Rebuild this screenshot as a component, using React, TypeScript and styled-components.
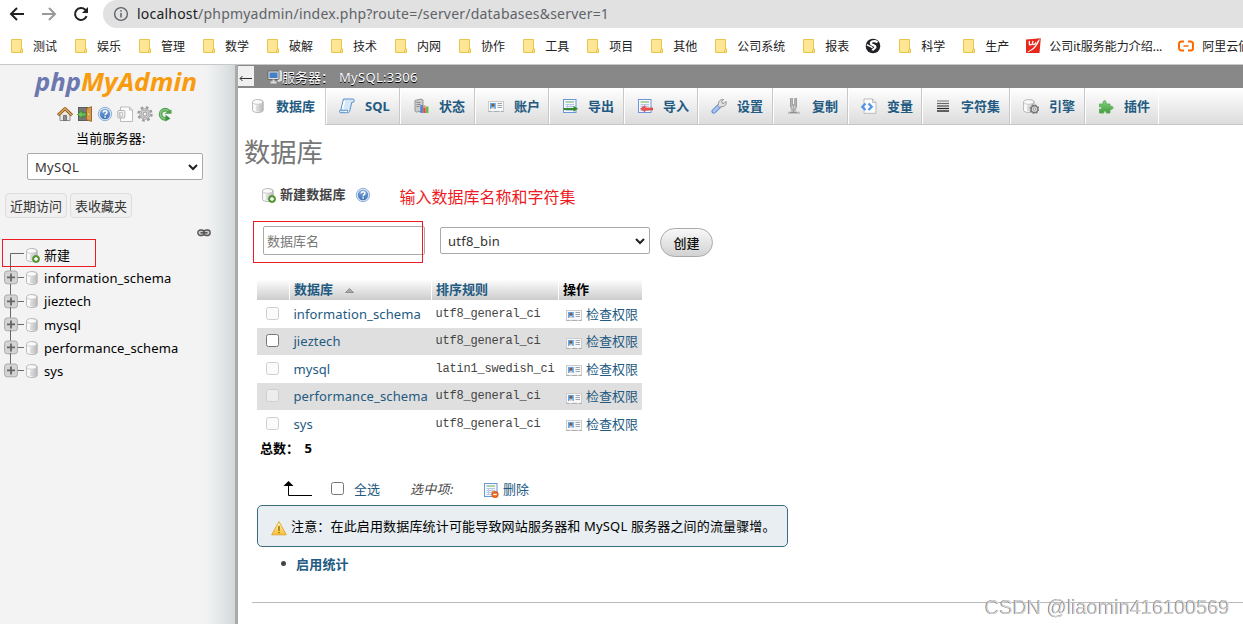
import React from "react";
import styled, { createGlobalStyle } from "styled-components";

const UI = `"Noto Sans", "Noto Sans CJK SC", sans-serif`;
const LINK = "#235a81";

const Global = createGlobalStyle`
  * { box-sizing: border-box; }
  html, body { margin: 0; padding: 0; overflow: hidden; }
  body { width: 1243px; height: 624px; font: 13px/18px ${UI}; color: #444; background: #fff; }
`;

const Page = styled.div`
  display: flex;
  flex-direction: column;
  width: 1243px;
  height: 624px;
  overflow: hidden;
`;

/* ---------- browser chrome ---------- */
const AddressRow = styled.div`
  display: flex;
  align-items: center;
  height: 28px;
  flex: none;
  padding-left: 9px;
`;
const NavIcons = styled.div`
  display: flex;
  gap: 16px;
  width: 94px;
`;
const AddressPill = styled.div`
  display: flex;
  align-items: center;
  gap: 8px;
  flex: 1;
  height: 28px;
  padding-left: 10px;
  border-radius: 14px 0 0 14px;
  background: #e1e1e1;
`;
const Url = styled.span`
  font-size: 14px;
  line-height: 20px;
  letter-spacing: 0.21px;
  color: #5f6368;
  white-space: nowrap;
  b { font-weight: 400; color: #202124; }
`;
const Bookmarks = styled.div`
  display: flex;
  align-items: center;
  gap: 16px;
  height: 37px;
  flex: none;
  padding-left: 9px;
  border-bottom: 1px solid #c8c8c8;
  overflow: hidden;
`;
const Bookmark = styled.div`
  display: flex;
  align-items: center;
  gap: 8px;
  flex: none;
  font-size: 12px;
  color: #222;
  white-space: nowrap;
  svg { flex: none; }
  span { padding-top: 1px; }
`;

/* ---------- sidebar ---------- */
const Body = styled.div`
  display: flex;
  flex: 1;
  min-height: 0;
`;
const Sidebar = styled.aside`
  position: relative;
  display: flex;
  flex-direction: column;
  width: 235px;
  flex: none;
  background: linear-gradient(to right, #f3f3f3 205px, #e4e8e9 220px, #d2d8da 235px);
  color: #000;
`;
const Divider = styled.div`
  width: 3px;
  flex: none;
  background: #aaa;
`;
const LogoRow = styled.div`
  height: 41px;
  padding: 1px 0 0 30px;
`;
const SideIcons = styled.div`
  display: flex;
  gap: 4px;
  height: 16px;
  padding-left: 57px;
`;
const ServerLabel = styled.div`
  height: 31px;
  padding: 7px 0 0 76px;
  letter-spacing: 0.2px;
`;
const Select = styled.div<{ $w: number }>`
  display: flex;
  align-items: center;
  justify-content: space-between;
  width: ${(p) => p.$w}px;
  height: 27px;
  padding: 0 3px 0 7px;
  border: 1px solid #aaa;
  border-radius: 2px;
  background: #fff;
  color: #333;
  letter-spacing: 0.3px;
`;
const SideSelect = styled.div`
  padding-left: 27px;
`;
const SideButtons = styled.div`
  display: flex;
  gap: 3px;
  padding: 13px 0 0 5px;
`;
const SideButton = styled.div`
  height: 25px;
  padding: 3px 4px;
  border: 1px solid #ddd;
  border-radius: 4px;
  background: #f0f0f0;
  color: #333;
`;
const LinkRow = styled.div`
  height: 25px;
  padding: 11px 0 0 197px;
  line-height: 0;
`;
const Tree = styled.div`
  display: flex;
  flex-direction: column;
`;
const TreeRow = styled.div`
  display: flex;
  align-items: center;
  height: 23.3px;
  padding-left: 4px;
`;
const TreeLabel = styled.span`
  margin-left: 4px;
  letter-spacing: 0.1px;
`;
const RedFrame = styled.div<{ $x: number; $y: number; $w: number; $h: number }>`
  position: absolute;
  left: ${(p) => p.$x}px;
  top: ${(p) => p.$y}px;
  width: ${(p) => p.$w}px;
  height: ${(p) => p.$h}px;
  border: 1px solid #ed1c24;
`;

/* ---------- main ---------- */
const Main = styled.main`
  position: relative;
  display: flex;
  flex-direction: column;
  flex: 1;
  min-width: 0;
`;
const ServerBar = styled.div`
  display: flex;
  align-items: center;
  height: 23px;
  flex: none;
  background: #888;
  color: #fff;
  text-shadow: 0 1px 0 #000;
`;
const Collapse = styled.div`
  display: flex;
  align-items: center;
  width: 16px;
  height: 20px;
  margin: -1px 13px 0 0;
  background: #f0f0f0;
`;
const ServerTitle = styled.span`
  margin-left: -1px;
`;
const ServerName = styled.span`
  margin-left: 5px;
  letter-spacing: 0.3px;
`;
const Tabs = styled.nav`
  display: flex;
  height: 37px;
  flex: none;
  background: linear-gradient(#fff, #dcdcdc);
  border-bottom: 1px solid #c6c6c6;
`;
const Tab = styled.div<{ $w: number; $active?: boolean }>`
  display: flex;
  align-items: center;
  gap: 10px;
  width: ${(p) => p.$w}px;
  height: ${(p) => (p.$active ? 37 : 36)}px;
  padding: 0 0 1px 12px;
  border-left: 1px solid #fff;
  border-right: 1px solid ${(p) => (p.$active ? "#ccc" : "#c8c8c8")};
  background: ${(p) => (p.$active ? "#fff" : "transparent")};
  color: ${LINK};
  font-weight: 700;
  white-space: nowrap;
  flex: none;
  &:first-child { padding-left: 11px; }
  &:last-child { border-right-color: #fff; }
`;
const Title = styled.h2`
  margin: 0;
  padding: 8px 0 0 6px;
  height: 62px;
  font-size: 26.3px;
  line-height: 38px;
  font-weight: 400;
  color: #777;
`;
const NewRow = styled.div`
  display: flex;
  align-items: center;
  height: 16px;
  padding-left: 22px;
  color: #444;
  b { margin: -2px 9px 0 4px; letter-spacing: 0.1px; }
`;
const Annotation = styled.span`
  margin: 4px 0 0 29px;
  font-size: 16px;
  line-height: 22px;
  color: #ed1c24;
`;
const FormRow = styled.div`
  display: flex;
  align-items: flex-start;
  height: 76px;
  padding: 23px 0 0 25px;
`;
const NameInput = styled.div`
  width: 162px;
  height: 29px;
  margin-right: 15px;
  padding: 5px 3px;
  border: 1px solid #aaa;
  border-radius: 2px;
  color: #777;
`;
const CharsetSelect = styled(Select)`
  margin-top: 1px;
`;
const CreateButton = styled.div`
  display: flex;
  align-items: center;
  justify-content: center;
  width: 53px;
  height: 29px;
  margin: 2px 0 0 10px;
  border: 1px solid #aaa;
  border-radius: 15px;
  background: linear-gradient(#f8f8f8, #d2d2d2);
  color: #111;
  font-weight: 500;
`;
const Table = styled.div`
  width: 385px;
  margin-left: 19px;
`;
const TableHead = styled.div`
  display: grid;
  grid-template-columns: 32px 141px 126px 83px;
  column-gap: 1px;
  height: 21px;
  font-weight: 700;
  color: ${LINK};
`;
const HeadCell = styled.div<{ $dark?: boolean }>`
  display: flex;
  align-items: center;
  gap: 12px;
  padding: 0 0 2px 4px;
  background: linear-gradient(#fff, #ccc);
  color: ${(p) => (p.$dark ? "#000" : LINK)};
  svg { margin-top: 3px; }
`;
const TableRow = styled.div<{ $odd?: boolean }>`
  display: grid;
  grid-template-columns: 36px 142px 131px 1fr;
  align-items: center;
  height: 27.5px;
  background: ${(p) => (p.$odd ? "#dfdfdf" : "#fff")};
`;
const Check = styled.span<{ $disabled?: boolean }>`
  display: block;
  width: 13px;
  height: 13px;
  margin: 0 0 1px 9px;
  border: 1px solid ${(p) => (p.$disabled ? "#cfcfcf" : "#767676")};
  border-radius: 2.5px;
  background: ${(p) => (p.$disabled ? "rgba(248,248,248,.55)" : "#fff")};
`;
const DbLink = styled.a`
  color: ${LINK};
  padding-left: 0.4px;
  letter-spacing: 0.11px;
`;
const Collation = styled.span`
  padding-left: 0.5px;
  font: 12px/18px "Liberation Mono", monospace;
  letter-spacing: -0.2px;
  color: #444;
  white-space: nowrap;
`;
const Action = styled.a`
  display: flex;
  align-items: center;
  gap: 4px;
  color: ${LINK};
  white-space: nowrap;
  svg { margin-top: 3px; }
`;
const Total = styled.div`
  height: 41px;
  padding: 1px 0 0 22px;
  font-weight: 700;
  color: #000;
  word-spacing: 2px;
`;
const BulkRow = styled.div`
  display: flex;
  align-items: center;
  height: 20px;
  padding-left: 45px;
  color: ${LINK};
`;
const BulkCheck = styled(Check)`
  margin: 0 10px 0 19px;
`;
const WithSelected = styled.i`
  width: 73px;
  margin-left: 30px;
  color: #444;
  letter-spacing: 0.3px;
`;
const Notice = styled.div`
  display: flex;
  align-items: center;
  gap: 4px;
  width: 531px;
  height: 42px;
  margin: 6px 0 0 19px;
  padding-left: 13px;
  border: 1px solid #3a6c7e;
  border-radius: 5px;
  background: #e8eef1;
  color: #000;
  letter-spacing: 0.16px;
  white-space: nowrap;
  svg { margin-top: 5px; }
`;
const Bullet = styled.div`
  display: flex;
  align-items: center;
  gap: 10px;
  height: 18px;
  margin: 8px 0 0 43px;
  font-weight: 700;
  letter-spacing: 0.2px;
  color: ${LINK};
  &::before { content: ""; width: 5px; height: 5px; border-radius: 50%; background: #444; }
`;
const Rule = styled.div`
  height: 1px;
  margin: 29px 0 0 14px;
  background: #bbb;
`;
const Watermark = styled.div`
  position: absolute;
  left: 747px;
  top: 530px;
  font: 20px/24px "Liberation Sans", sans-serif;
  letter-spacing: -0.05px;
  color: rgba(255, 255, 255, 0.75);
  text-shadow: -0.5px -0.5px 0.5px #444;
  white-space: nowrap;
`;

/* ---------- icons ---------- */
const S = ({ w = 16, h = 16, children }: { w?: number; h?: number; children: React.ReactNode }) => (
  <svg width={w} height={h} viewBox={`0 0 ${w} ${h}`} fill="none">{children}</svg>
);

const Defs = () => (
  <svg width="0" height="0" style={{ position: "absolute" }}>
    <defs>
      <linearGradient id="cyl" x1="0" x2="1" y1="0" y2="0">
        <stop offset="0" stopColor="#fff" /><stop offset=".4" stopColor="#f4f4f4" /><stop offset="1" stopColor="#b4b4b4" />
      </linearGradient>
      <linearGradient id="helpg" x1="0" x2="0" y1="0" y2="1">
        <stop offset="0" stopColor="#7fa9dc" /><stop offset="1" stopColor="#3d73b8" />
      </linearGradient>
      <linearGradient id="green" x1="0" x2="0" y1="0" y2="1">
        <stop offset="0" stopColor="#8bcf83" /><stop offset="1" stopColor="#3f9e3c" />
      </linearGradient>
      <linearGradient id="warn" x1="0" x2="0" y1="0" y2="1">
        <stop offset="0" stopColor="#fff6c4" /><stop offset="1" stopColor="#f6c12c" />
      </linearGradient>
    </defs>
  </svg>
);

const Cylinder = () => (
  <>
    <path d="M2.600 4v8.400c0 1.200 2.200 2.100 5.200 2.100s5.400-.9 5.400-2.100V4c0-1.400-2.200-2.400-5.300-2.400S2.600 2.600 2.600 4z" fill="url(#cyl)" stroke="#b8b8b8" />
    <ellipse cx="7.900" cy="4" rx="4.300" ry="1.700" fill="#fafafa" />
    <path d="M3.400 5.400c1.800 1.300 7.200 1.300 9 0" stroke="#cacaca" />
    <path d="M7 7.500v5.500M9 7.500v5.500M11 7v5.500" stroke="#c0c0c0" strokeWidth=".9" />
  </>
);
const Db = () => <S><Cylinder /></S>;
const DbAdd = () => (
  <S>
    <Cylinder />
    <circle cx="12" cy="12" r="3.500" fill="#5a9a35" stroke="#4a8a2c" strokeWidth=".8" />
    <path d="M12 10v4M10 12h4" stroke="#fff" strokeWidth="1.400" />
  </S>
);
const Help = () => (
  <S>
    <circle cx="8" cy="8" r="6.700" fill="#dce8f6" stroke="#8fb0d8" />
    <circle cx="8" cy="8" r="5.200" fill="url(#helpg)" />
    <path d="M6.200 6.600c0-2.400 3.700-2.300 3.700-.2 0 1.300-1.800 1.400-1.800 2.800M8.100 10.300v1.400" stroke="#fff" strokeWidth="1.500" />
  </S>
);
const Home = () => (
  <S>
    <path d="M3 8.500V14.500h10V8.500L8 4z" fill="#e9e9e4" stroke="#8f8f8f" />
    <path d="M6.500 14.500V9.500h3v5z" fill="#8f8f8f" stroke="#666" strokeWidth=".8" />
    <path d="M1 9.200L8 2.600l7 6.600" stroke="#8a5417" strokeWidth="3" strokeLinejoin="round" />
    <path d="M1.200 9L8 2.600 14.800 9" stroke="#dba25b" strokeWidth="1.500" />
  </S>
);
const Exit = () => (
  <S>
    <rect x="1.500" y="1.500" width="9" height="13" fill="#777" stroke="#5c5c5c" />
    <path d="M9.500 2.500l5-1.800v14.600l-5-1.500z" fill="#d99c4e" stroke="#9d682a" />
    <path d="M.5 8.500l4.500-4v2.500h4v3H5v2.500z" fill="#6fc25b" stroke="#348a28" strokeWidth=".8" />
    <circle cx="11.500" cy="8.300" r=".8" fill="#ffe9a0" />
  </S>
);
const Doc = () => (
  <S>
    <path d="M3.500 1h9l3 3v11.500h-12z" fill="#fcfcfc" stroke="#bbb" />
    <path d="M12.500 1v3h3" stroke="#bbb" />
    <rect x=".8" y="4.500" width="7" height="7.500" rx="1" fill="#f4f4f4" stroke="#b0b0b0" />
    <path d="M3 6.500h2.500v4H3zM2.500 6v5" stroke="#bbb" strokeWidth=".8" />
  </S>
);
const Gear = () => (
  <S>
    <circle cx="8" cy="8" r="6.500" stroke="#999" strokeWidth="2.400" strokeDasharray="2.600 2.505" />
    <circle cx="8" cy="8" r="4.500" fill="#d8d8d8" stroke="#a9a9a9" strokeWidth="2.400" />
    <circle cx="8" cy="8" r="4.500" stroke="#d0d0d0" strokeWidth="1" />
    <circle cx="8" cy="8" r="2" fill="#f3f3f3" stroke="#999" />
  </S>
);
const Reload = () => (
  <S>
    <path d="M12.300 6.200A4.600 4.600 0 1 0 9 12.800" stroke="#4a9f4c" strokeWidth="3.600" />
    <path d="M12 6A4.500 4.500 0 1 0 9 12.500" stroke="#85c780" strokeWidth="1.600" />
    <path d="M7 7.800h7.500V3.500z" fill="#4da34c" />
    <path d="M8.500 8.800l5 3.800-5 3z" fill="#3c9641" />
  </S>
);
const Sheet = ({ dir }: { dir?: "out" | "in" | "del" }) => (
  <S>
    <rect x="1.500" y="1.500" width="12.500" height="13" fill="#f5f9ff" stroke="#6d96d6" />
    <path d="M3.500 4h8.500" stroke="#84b878" strokeWidth="1.200" />
    <path d="M3.500 6.500h8.500M3.500 8.500h8.500M3.500 10.500h8.500M3.500 12.500h8.500" stroke="#aabfe0" strokeWidth=".9" />
    <path d="M5.500 6v7M9 6v7" stroke="#b8cae6" strokeWidth=".9" />
    {dir === "out" && <path d="M1.500 10h10V7.700l4.500 3.100-4.500 3V12h-10z" fill="#35892c" />}
    {dir === "in" && <path d="M16 10H8V7.700l-4.500 3.100 4.500 3V12h8z" fill="#ef5959" stroke="#e02828" strokeWidth=".6" />}
    {dir === "del" && (
      <>
        <circle cx="12" cy="12.500" r="3.300" fill="#ee6a1d" stroke="#c34a0d" strokeWidth=".6" />
        <path d="M10.200 12.500h3.600" stroke="#fff" strokeWidth="1.300" />
      </>
    )}
  </S>
);
const Scroll = () => (
  <S>
    <path d="M4.500 1h9.500c1.800 0 1.800 3.300 0 3.300h-1.200L10.800 12.700c-.3 1.300-1 2-2 2H1.300c-1.200 0-1-2.700.5-2.700z" fill="#d5e8fa" stroke="#5a8fc8" />
    <path d="M1.500 12.300h7.200c-.4 1 0 2-.3 2.200" fill="#fff" stroke="#5a8fc8" />
    <path d="M5.500 3L3.500 11" stroke="#fff" strokeWidth="1.600" />
  </S>
);
const Status = () => (
  <S>
    <path d="M2 2.500L8 1l2 1v11l-6.500 1L2 13z" fill="#ccc" stroke="#969696" />
    <path d="M3.500 4.500h4M3.500 6.500h4M3.500 8.500h3" stroke="#8c8c8c" />
    <rect x="7.300" y="7" width="2.500" height="8" fill="#4c85dc" />
    <rect x="10.200" y="9.500" width="2.500" height="5.500" fill="#e84b35" />
    <rect x="13" y="8.500" width="2.500" height="6.500" fill="#69ba4e" />
    <rect x="10.200" y="7.500" width="2.500" height="2" fill="#ef8a60" />
  </S>
);
const Card = () => (
  <S>
    <rect x=".5" y="3.500" width="15" height="10" fill="#f8f9fa" stroke="#ccc" />
    <path d="M.5 13.400h3M6 13.400h5M13 13.400h2.500" stroke="#aaa" />
    <rect x="2" y="5" width="5.800" height="6" fill="#64a5e8" />
    <circle cx="4.900" cy="7.200" r="1.400" fill="#8a5a35" />
    <path d="M3 11c.3-2.200 3.600-2.200 3.900 0z" fill="#f0d8c0" />
    <path d="M9.500 5.500h4.500M9.500 7.500h4.500M9.500 9.500h4.500" stroke="#9ba6b2" />
  </S>
);
const Wrench = () => (
  <S>
    <path d="M2.800 13.400L8.300 8" stroke="#5d8bd0" strokeWidth="4.600" strokeLinecap="round" />
    <path d="M2.900 13.200L8 8.300" stroke="#a9c6f3" strokeWidth="2.800" strokeLinecap="round" />
    <path d="M7.500 6.500c-.5-3 2-5.500 5-5L10.800 3.500l.4 1.700 1.800.2 2-2c1 3-1.500 5.800-4.800 5.200L9 9.500 6.500 7.500z" fill="#e2e2e2" stroke="#8c8c8c" />
  </S>
);
const Replicate = () => (
  <S>
    <path d="M5.300 0v9c0 2 1.200 2.500 1.200 4.500M9.700 0v9c0 2-1.200 2.500-1.200 4.500" stroke="#b4b4b4" strokeWidth="2.200" />
    <path d="M4.500 0v9M6.500 0v8M8.700 0v8M10.500 0v9M7.500 6v8" stroke="#8f8f8f" strokeWidth=".7" />
    <path d="M2 14.800h12" stroke="#bbb" strokeWidth="2" />
    <path d="M4 14.300h7" stroke="#888" />
  </S>
);
const Vars = () => (
  <S>
    <path d="M3 1h8.500L15 4.500V15.300H3z" fill="#fcfcfc" stroke="#bbb" />
    <path d="M11.500 1v3.500H15" stroke="#bbb" />
    <path d="M4.500 5.500L1.300 8.800l3.200 3.200M7.500 5.500l3.200 3.300L7.500 12" stroke="#5196e4" strokeWidth="2.300" />
  </S>
);
const Lines = () => (
  <S>
    {[2.5, 5, 7.5, 10, 12.5].map((y, i) => (
      <path key={y} d={`M2 ${y + 0.5}h12`} stroke={["#888", "#666", "#444", "#222", "#000"][i]} strokeWidth="1.200" />
    ))}
  </S>
);
const Engine = () => (
  <S>
    <g transform="translate(-2 0)"><Cylinder /></g>
    <circle cx="11.500" cy="11.200" r="3.300" fill="#ddd" stroke="#777" strokeWidth="1.300" />
    <circle cx="11.500" cy="11.200" r="4.200" stroke="#777" strokeWidth="1.300" strokeDasharray="1.650 1.650" />
    <circle cx="11.500" cy="11.200" r="1.200" fill="#fff" stroke="#777" strokeWidth=".8" />
  </S>
);
const Plugin = () => (
  <S>
    <path d="M1.500 6h4C3.500 1.500 9.500 1.500 8 6h4v2.500c4-1.500 4 4 0 2.700V15H8.300c.8-2.800-3.500-2.800-2.500 0H1.500v-4c3 1 3-3 0-2z" fill="url(#green)" stroke="#5cac55" strokeWidth=".9" />
  </S>
);
const ServerIcon = () => (
  <S>
    <path d="M10 1.500l4-.8L15.500 2v10L12 13.500l-2-1z" fill="#ddd" stroke="#777" strokeWidth=".8" />
    <rect x="1" y="2" width="11" height="8.500" rx=".8" fill="#ddd" stroke="#555" strokeWidth=".8" />
    <rect x="2.500" y="3.500" width="8" height="5.500" fill="#457fc7" />
    <path d="M6.500 10.500v2.500M3.500 13.500h6" stroke="#ddd" strokeWidth="1.800" />
  </S>
);
const Warning = () => (
  <S>
    <path d="M8 1.500L15.300 14.800H.7z" fill="url(#warn)" stroke="#e3aa3c" strokeLinejoin="round" />
    <path d="M8 6V11M8 12v1.300" stroke="#a87a1c" strokeWidth="1.700" />
  </S>
);
const Chain = () => (
  <S w={14} h={8}>
    <rect x=".8" y="1" width="6.500" height="5.500" rx="2.700" fill="#ccc" stroke="#555" strokeWidth="1.300" />
    <rect x="6.700" y="1" width="6.500" height="5.500" rx="2.700" fill="#ccc" stroke="#555" strokeWidth="1.300" />
    <path d="M3.500 3.800h7" stroke="#555" strokeWidth="1.500" />
  </S>
);
const Chevron = () => (
  <S w={12} h={12}><path d="M2 4l4 4 4-4" stroke="#222" strokeWidth="2" /></S>
);
const Folder = () => (
  <S>
    <path d="M2.500 1.500h10v9.500h1v3.500h-11z" fill="#ffe694" stroke="#e8c54c" />
    <path d="M11.500 14V11h1.500v3z" fill="#fff0b8" stroke="#e8c54c" strokeWidth=".8" />
  </S>
);
const Globe = () => (
  <S>
    <circle cx="8" cy="8" r="7.300" fill="#202124" />
    <path d="M12.500 4.300C10 2.500 6 3 5.800 5.300c0 2.200 4.700 1.500 4.700 3.700 0 1.600-2.500 1.500-3 3.500" stroke="#fff" strokeWidth="2.200" />
    <path d="M2 6.500c1.500 2 3.300 1.200 5.500 3.300" stroke="#fff" strokeWidth="1.500" />
  </S>
);
const RedLogo = () => (
  <S>
    <path d="M1 1.500L15.800.3 14.500 15H1z" fill="#e7281c" />
    <path d="M4.500 3c-1 3.800.3 5 2.200 3M8 3c-1.400 4 .8 5 3.300 1.500" stroke="#fff" strokeWidth="1.300" />
    <path d="M15 1C12.500 8 9 12.500 1.500 14.500 8 10.500 11 8 12.500 3z" fill="#fff" />
  </S>
);
const AliLogo = () => (
  <S>
    <path d="M6 3.500H3.500A2.500 2.500 0 0 0 1 6v4a2.500 2.500 0 0 0 2.500 2.500H6M10 3.500h2.500A2.500 2.500 0 0 1 15 6v4a2.500 2.500 0 0 1-2.500 2.500H10" stroke="#ff6a00" strokeWidth="2" />
    <path d="M5.500 8h5" stroke="#ff6a00" strokeWidth="1.500" />
  </S>
);
const BackArrow = ({ color, flip }: { color: string; flip?: boolean }) => (
  <S>
    <g transform={flip ? "matrix(-1 0 0 1 16 0)" : undefined}>
      <path d="M15 8H2.500M8 2L2 8l6 6" stroke={color} strokeWidth="2" />
    </g>
  </S>
);
const Refresh = () => (
  <S>
    <path d="M13.600 10.200A6 6 0 1 1 12.300 3.700L14 5.400" stroke="#202124" strokeWidth="2" />
    <path d="M15 1v6H9z" fill="#202124" />
  </S>
);
const Info = () => (
  <S>
    <circle cx="8" cy="8" r="6.400" stroke="#5f6368" strokeWidth="1.400" />
    <path d="M8 7v4.500M8 4.300v1.500" stroke="#5f6368" strokeWidth="1.500" />
  </S>
);
const Expander = ({ first }: { first?: boolean }) => (
  <svg width="20" height="23.3" viewBox="0 0 20 23.3" fill="none" style={{ overflow: "visible" }}>
    {first ? (
      <path d="M20 10.500H6.500V18" stroke="#666" />
    ) : (
      <>
        <path d="M13 11.500h7M6.500 -6V5" stroke="#666" />
        <rect x=".6" y="5" width="12.800" height="12.800" rx="2.500" fill="#d4d4d4" stroke="#aaa" />
        <path d="M3 11.400h8M7 7.400v8" stroke="#666" strokeWidth="1.800" />
      </>
    )}
  </svg>
);
const UpArrow = () => (
  <S w={29} h={16}>
    <path d="M5.500 3v11.500H29" stroke="#000" />
    <path d="M5.500 0L10.500 5H.5z" fill="#000" />
  </S>
);
const SortMark = () => (
  <S w={9} h={5}><path d="M4.500 .5L8.500 4.500h-8z" fill="#aaa" stroke="#777" strokeWidth=".7" /></S>
);
const Logo = () => (
  <svg width="190" height="38" viewBox="0 0 190 38">
    <g fontFamily="'Open Sans', sans-serif" fontSize="25.500" fontStyle="italic" fontWeight="700">
      <text x="5" y="24.500" fill="#6c78af" textLength="46" lengthAdjust="spacingAndGlyphs">php</text>
      <text x="51" y="24.500" fill="#f89c0e" textLength="116" lengthAdjust="spacingAndGlyphs">MyAdmin</text>
    </g>
  </svg>
);

/* ---------- data ---------- */
const bookmarks: [React.ReactNode, string][] = [
  ...["测试", "娱乐", "管理", "数学", "破解", "技术", "内网", "协作", "工具", "项目", "其他", "公司系统", "报表"].map(
    (t): [React.ReactNode, string] => [<Folder />, t]
  ),
  [<Globe />, ""],
  [<Folder />, "科学"],
  [<Folder />, "生产"],
  [<RedLogo />, "公司it服务能力介绍..."],
  [<AliLogo />, "阿里云価"],
];
const tabs: [React.ReactNode, string, number][] = [
  [<Db />, "数据库", 88],
  [<Scroll />, "SQL", 74],
  [<Status />, "状态", 75],
  [<Card />, "账户", 74],
  [<Sheet dir="out" />, "导出", 75],
  [<Sheet dir="in" />, "导入", 74],
  [<Wrench />, "设置", 75],
  [<Replicate />, "复制", 75],
  [<Vars />, "变量", 74],
  [<Lines />, "字符集", 88],
  [<Engine />, "引擎", 75],
  [<Plugin />, "插件", 74],
];
const databases = [
  { name: "information_schema", collation: "utf8_general_ci" },
  { name: "jieztech", collation: "utf8_general_ci" },
  { name: "mysql", collation: "latin1_swedish_ci" },
  { name: "performance_schema", collation: "utf8_general_ci" },
  { name: "sys", collation: "utf8_general_ci" },
];

export default function App() {
  return (
    <Page>
      <Global />
      <Defs />
      <AddressRow>
        <NavIcons>
          <BackArrow color="#202124" />
          <BackArrow color="#9a9a9a" flip />
          <Refresh />
        </NavIcons>
        <AddressPill>
          <Info />
          <Url><b>localhost</b>/phpmyadmin/index.php?route=/server/databases&amp;server=1</Url>
        </AddressPill>
      </AddressRow>
      <Bookmarks>
        {bookmarks.map(([icon, text], i) => (
          <Bookmark key={i}>{icon}{text && <span>{text}</span>}</Bookmark>
        ))}
      </Bookmarks>
      <Body>
        <Sidebar>
          <LogoRow><Logo /></LogoRow>
          <SideIcons><Home /><Exit /><Help /><Doc /><Gear /><Reload /></SideIcons>
          <ServerLabel>当前服务器:</ServerLabel>
          <SideSelect><Select $w={176}>MySQL<Chevron /></Select></SideSelect>
          <SideButtons>
            <SideButton>近期访问</SideButton>
            <SideButton>表收藏夹</SideButton>
          </SideButtons>
          <LinkRow><Chain /></LinkRow>
          <Tree>
            <TreeRow><Expander first /><DbAdd /><TreeLabel>新建</TreeLabel></TreeRow>
            {databases.map((d) => (
              <TreeRow key={d.name}><Expander /><Db /><TreeLabel>{d.name}</TreeLabel></TreeRow>
            ))}
          </Tree>
          <RedFrame $x={2} $y={174} $w={94} $h={28} />
        </Sidebar>
        <Divider />
        <Main>
          <ServerBar>
            <Collapse>
              <S><path d="M2 10.500h12M4.500 8L2 10.500 4.500 13" stroke="#333" /></S>
            </Collapse>
            <ServerIcon /><ServerTitle>服务器：</ServerTitle><ServerName>MySQL:3306</ServerName>
          </ServerBar>
          <Tabs>
            {tabs.map(([icon, text, w], i) => (
              <Tab key={text} $w={w} $active={i === 0}>{icon}{text}</Tab>
            ))}
          </Tabs>
          <Title>数据库</Title>
          <NewRow>
            <DbAdd /><b>新建数据库</b><Help />
            <Annotation>输入数据库名称和字符集</Annotation>
          </NewRow>
          <FormRow>
            <NameInput>数据库名</NameInput>
            <CharsetSelect $w={210}>utf8_bin<Chevron /></CharsetSelect>
            <CreateButton>创建</CreateButton>
          </FormRow>
          <Table>
            <TableHead>
              <HeadCell />
              <HeadCell>数据库 <SortMark /></HeadCell>
              <HeadCell>排序规则</HeadCell>
              <HeadCell $dark>操作</HeadCell>
            </TableHead>
            {databases.map((d, i) => (
              <TableRow key={d.name} $odd={i % 2 === 1}>
                <Check $disabled={i !== 1} />
                <DbLink>{d.name}</DbLink>
                <Collation>{d.collation}</Collation>
                <Action><Card />检查权限</Action>
              </TableRow>
            ))}
          </Table>
          <Total>总数： 5</Total>
          <BulkRow>
            <UpArrow />
            <BulkCheck />
            全选
            <WithSelected>选中项:</WithSelected>
            <Action><Sheet dir="del" />删除</Action>
          </BulkRow>
          <Notice><Warning />注意：在此启用数据库统计可能导致网站服务器和 MySQL 服务器之间的流量骤增。</Notice>
          <Bullet>启用统计</Bullet>
          <Rule />
          <RedFrame $x={15} $y={156} $w={170} $h={42} />
          <Watermark>CSDN @liaomin416100569</Watermark>
        </Main>
      </Body>
    </Page>
  );
}
